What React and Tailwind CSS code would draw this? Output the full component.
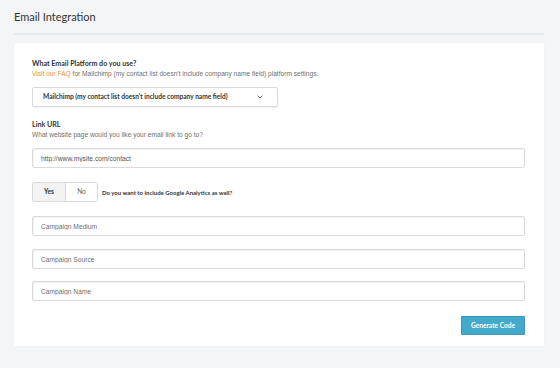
import { useState } from "react";

const label = "font-['Lato',sans-serif] font-bold text-[7.1px] leading-[10px] text-[#333]";
const help = "font-['Liberation_Sans',Arial,sans-serif] text-[6.6px] leading-[10px] text-[#6f6f6f]";
const input =
  "block w-full h-[20px] px-[8px] border border-[#dadada] rounded-[2px] bg-white shadow-[inset_1px_1px_1px_rgba(0,0,0,0.05)] font-['Liberation_Sans',Arial,sans-serif] text-[6.7px] text-[#555] placeholder:text-[#6f6f6f] outline-none";

export default function App() {
  const [ga, setGa] = useState("yes");
  const [url, setUrl] = useState("http://www.mysite.com/contact");

  return (
    <div className="min-h-[368px] w-[560px] bg-[#f4f5f7] pl-[14px] pr-[16px]">
      <div className="h-[35px] flex items-center border-b-2 border-[#e6e8eb]">
        <h1 className="font-['Lato',sans-serif] text-[11px] text-[#333] pt-[1px]">Email Integration</h1>
      </div>

      <div className="mt-[8px] bg-white shadow-[0_0_1px_rgba(0,0,0,0.08)] pl-[18px] pr-[19px] pt-[16px] pb-[11px]">
        <p className={label}>What Email Platform do you use?</p>
        <p className={help}>
          <a href="#" className="text-[#e8942e]">Visit our FAQ</a> for Mailchimp (my contact list doesn't include company name field) platform settings.
        </p>

        <button
          type="button"
          className="mt-[8px] w-[246px] h-[20px] flex items-center justify-between pl-[10px] pr-[14px] border border-[#dadada] rounded-[2px] bg-white shadow-[0_1px_1px_rgba(0,0,0,0.04)]"
        >
          <span className="font-['Lato',sans-serif] font-bold text-[6.6px] text-[#333]">
            Mailchimp (my contact list doesn't include company name field)
          </span>
          <svg width="6" height="4" viewBox="0 0 6 4" fill="none">
            <path d="M1 1l2 2 2-2" stroke="#555" strokeWidth="0.9" strokeLinecap="round" strokeLinejoin="round" />
          </svg>
        </button>

        <p className={label + " mt-[13px]"}>Link URL</p>
        <p className={help}>What website page would you like your email link to go to?</p>
        <input className={input + " mt-[8px]"} value={url} onChange={(e) => setUrl(e.target.value)} />

        <div className="mt-[14px] flex items-center gap-[4px]">
          <div className="flex h-[20px] border border-[#dadada] rounded-[2px] overflow-hidden">
            {["yes", "no"].map((v) => (
              <button
                key={v}
                type="button"
                onClick={() => setGa(v)}
                className={
                  "w-[32px] h-full font-['Lato',sans-serif] text-[6.6px] " +
                  (v === "no" ? "border-l border-[#dadada] " : "") +
                  (ga === v ? "bg-[#f3f3f3] font-bold text-[#333]" : "bg-white text-[#666]")
                }
              >
                {v === "yes" ? "Yes" : "No"}
              </button>
            ))}
          </div>
          <span className="font-['Lato',sans-serif] font-bold text-[6px] text-[#333]">
            Do you want to include Google Analytics as well?
          </span>
        </div>

        <input className={input + " mt-[14px]"} placeholder="Campaign Medium" />
        <input className={input + " mt-[13px]"} placeholder="Campaign Source" />
        <input className={input + " mt-[12px]"} placeholder="Campaign Name" />

        <div className="mt-[15px] flex justify-end">
          <button
            type="button"
            className="w-[64px] h-[19px] bg-[#45a9cc] border border-[#3894b8] rounded-[1px] font-['Lato',sans-serif] font-bold text-[6.6px] text-white"
          >
            Generate Code
          </button>
        </div>
      </div>
    </div>
  );
}
